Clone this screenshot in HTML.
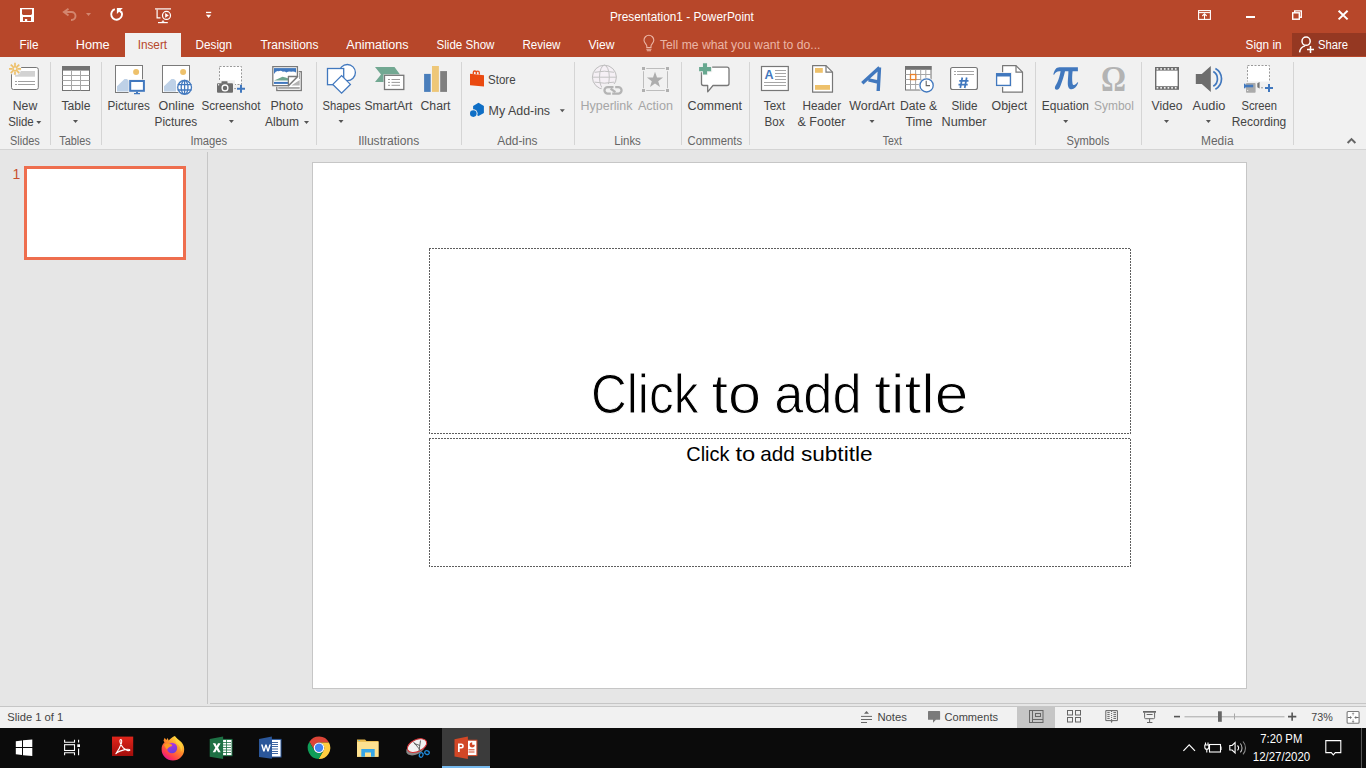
<!DOCTYPE html>
<html><head><meta charset="utf-8"><title>PowerPoint</title>
<style>
html,body{margin:0;padding:0;width:1366px;height:768px;overflow:hidden;background:#E6E6E6}
svg{display:block;font-family:"Liberation Sans",sans-serif}
</style></head><body>
<svg width="1366" height="768" viewBox="0 0 1366 768">
<rect x="0" y="0" width="1366" height="57" fill="#B7472A"/>
<rect x="125" y="33" width="56" height="24" fill="#F1F1F1"/>
<rect x="1292" y="33" width="74" height="23" fill="#953822"/>
<path fill-rule="evenodd" fill="#fff" d="M20 8h14v14h-14z M22 9.2h10v4.8l-1 1h-8l-1-1z M23 17h8v4h-3.8v-2.1h-2.3v2.1h-1.9z"/>
<g fill="none" stroke="#D3866F" stroke-width="1.9"><path d="M68.5 8.7l-4.6 3.3 4.6 3.4"/><path d="M64.5 12h7a4 4 0 0 1 0 8h-0.5"/></g>
<path d="M86 13h5l-2.5 3z" fill="#D3866F"/>
<path d="M114.8 9.2A5.4 5.4 0 1 0 121.4 11.8" fill="none" stroke="#fff" stroke-width="1.9"/><path d="M116.9 8.1h5.9l-5.9 5.8z" fill="#fff"/><path d="M118.6 9.8l2.9 2.7" stroke="#fff" stroke-width="1.9"/>
<g fill="none" stroke="#fff" stroke-width="1.2"><path d="M155 8.9h16"/><path d="M157.1 9.5v8.3h3.4"/><circle cx="166.5" cy="15.4" r="4"/><path d="M158 22.6h9.8"/></g>
<path d="M165.2 13v4.8l3.6-2.4z" fill="#fff"/><path d="M161.5 22.6l1.5-2 1.5 2" stroke="#fff" fill="none" stroke-width="1"/>
<rect x="206" y="11.8" width="5.2" height="1.3" fill="#fff"/><path d="M206 14.8h5.2l-2.6 3.2z" fill="#fff"/>
<g fill="none" stroke="#fff" stroke-width="1.1"><rect x="1198.6" y="10.6" width="11.8" height="8.8"/><path d="M1198.6 12.6h11.8"/><path d="M1204.5 19.4v-5.5M1202.3 16l2.2-2.2 2.2 2.2"/></g>
<rect x="1246" y="16" width="9" height="2" fill="#fff"/>
<g fill="none" stroke="#fff" stroke-width="1.4"><rect x="1292.7" y="12.8" width="6.6" height="6.4"/><path d="M1294.7 12.8v-1.9h6.6v6.4h-2"/></g>
<path d="M1338.6 10.7l9 8.7M1347.6 10.7l-9 8.7" stroke="#fff" stroke-width="2"/>
<g fill="none" stroke="#EBB6A6" stroke-width="1.1"><path d="M646.8 47.5v-1.6c0-1.4-2.8-3.3-2.8-5.7a4.9 4.9 0 0 1 9.8 0c0 2.4-2.8 4.3-2.8 5.7v1.6z"/><path d="M646.3 49.2h5.2M646.8 50.7h4.2"/></g>
<g fill="none" stroke="#fff" stroke-width="1.5"><circle cx="1306.1" cy="41.2" r="4.1"/><path d="M1299.6 52.4a7.5 7.5 0 0 1 5.5-6.5"/><path d="M1307 49.6h7M1310.5 46.1v7"/></g>
<text x="681.9" y="21" font-size="12" fill="#fff" text-anchor="middle" textLength="144" lengthAdjust="spacingAndGlyphs" >Presentation1 - PowerPoint</text>
<text x="29" y="49" font-size="12" fill="#fff" text-anchor="middle" textLength="19" lengthAdjust="spacingAndGlyphs" >File</text>
<text x="92.7" y="49" font-size="12" fill="#fff" text-anchor="middle" textLength="34" lengthAdjust="spacingAndGlyphs" >Home</text>
<text x="213.8" y="49" font-size="12" fill="#fff" text-anchor="middle" textLength="36.5" lengthAdjust="spacingAndGlyphs" >Design</text>
<text x="289.5" y="49" font-size="12" fill="#fff" text-anchor="middle" textLength="58" lengthAdjust="spacingAndGlyphs" >Transitions</text>
<text x="377.4" y="49" font-size="12" fill="#fff" text-anchor="middle" textLength="62.3" lengthAdjust="spacingAndGlyphs" >Animations</text>
<text x="465.5" y="49" font-size="12" fill="#fff" text-anchor="middle" textLength="58" lengthAdjust="spacingAndGlyphs" >Slide Show</text>
<text x="541.5" y="49" font-size="12" fill="#fff" text-anchor="middle" textLength="38" lengthAdjust="spacingAndGlyphs" >Review</text>
<text x="601.5" y="49" font-size="12" fill="#fff" text-anchor="middle" textLength="26" lengthAdjust="spacingAndGlyphs" >View</text>
<text x="152.4" y="49" font-size="12" fill="#B7472A" text-anchor="middle" textLength="29.5" lengthAdjust="spacingAndGlyphs" >Insert</text>
<text x="660" y="49" font-size="12" fill="#EBB6A6" text-anchor="start" textLength="160.5" lengthAdjust="spacingAndGlyphs" >Tell me what you want to do...</text>
<text x="1263.6" y="48.7" font-size="12" fill="#fff" text-anchor="middle" textLength="36" lengthAdjust="spacingAndGlyphs" >Sign in</text>
<text x="1318" y="48.7" font-size="12" fill="#fff" text-anchor="start" textLength="30" lengthAdjust="spacingAndGlyphs" >Share</text>
<rect x="0" y="57" width="1366" height="92" fill="#F1F1F1"/>
<rect x="0" y="149" width="1366" height="1" fill="#D4D4D4"/>
<rect x="50" y="62" width="1" height="83" fill="#D5D5D5"/>
<rect x="101" y="62" width="1" height="83" fill="#D5D5D5"/>
<rect x="316" y="62" width="1" height="83" fill="#D5D5D5"/>
<rect x="461" y="62" width="1" height="83" fill="#D5D5D5"/>
<rect x="574" y="62" width="1" height="83" fill="#D5D5D5"/>
<rect x="681" y="62" width="1" height="83" fill="#D5D5D5"/>
<rect x="749" y="62" width="1" height="83" fill="#D5D5D5"/>
<rect x="1035" y="62" width="1" height="83" fill="#D5D5D5"/>
<rect x="1141" y="62" width="1" height="83" fill="#D5D5D5"/>
<rect x="1293" y="62" width="1" height="83" fill="#D5D5D5"/>
<rect x="11.5" y="67.5" width="26.8" height="22" rx="2" fill="#fff" stroke="#777777"/>
<rect x="15" y="71" width="20" height="5.7" fill="#D2D2D2"/>
<g stroke="#A0A0A0" stroke-width="1"><path d="M15 81.5h2M18 81.5h17M15 84.5h2M18 84.5h17"/></g>
<circle cx="15" cy="68.8" r="6.5" fill="#F1F1F1"/>
<path d="M17.60 68.80L21.00 68.80M16.84 70.64L19.24 73.04M15.00 71.40L15.00 74.80M13.16 70.64L10.76 73.04M12.40 68.80L9.00 68.80M13.16 66.96L10.76 64.56M15.00 66.20L15.00 62.80M16.84 66.96L19.24 64.56" stroke="#EEC16B" stroke-width="1.7"/><circle cx="15" cy="68.8" r="2" fill="none" stroke="#EEC16B" stroke-width="1.4"/>
<rect x="62.5" y="66.5" width="27" height="24" fill="#fff" stroke="#737373"/>
<rect x="62" y="66" width="28" height="4.6" fill="#737373"/>
<path d="M71.5 70v20.5M80.5 70v20.5M62.5 75.5h27M62.5 80.5h27M62.5 85.5h27" stroke="#A6A6A6"/>
<rect x="115.5" y="65.5" width="27" height="27" fill="#fff" stroke="#7A7A7A"/>
<circle cx="136.1" cy="71.9" r="3" fill="#EEC16B"/>
<path d="M117 91.5v-5.3l7.5-7.2h2.5l2 2v10.5z" fill="#BED1E7"/>
<rect x="162.5" y="65.5" width="27" height="27" fill="#fff" stroke="#7A7A7A"/>
<circle cx="183.1" cy="71.9" r="3" fill="#EEC16B"/>
<path d="M164 91.5v-5.3l7.5-7.2h2.5l2 2v10.5z" fill="#BED1E7"/>
<rect x="128.5" y="79.3" width="17.5" height="16" fill="#F1F1F1"/>
<rect x="130.2" y="81" width="13.7" height="9.8" fill="#fff" stroke="#4178BE" stroke-width="2"/>
<path d="M134 93.7h6M136 92.5h2" stroke="#4178BE" stroke-width="1.3"/>
<circle cx="184.6" cy="87.3" r="8.3" fill="#F1F1F1"/>
<g fill="none" stroke="#4178BE" stroke-width="1.3"><circle cx="184.6" cy="87.3" r="6.9" fill="#fff"/><ellipse cx="184.6" cy="87.3" rx="3.4" ry="6.9"/><path d="M177.7 84.6h13.8M177.7 90h13.8M184.6 80.4v13.8"/></g>
<rect x="219.5" y="66.5" width="22" height="18" fill="#fff" stroke="#9A9A9A" stroke-dasharray="2 1.5"/>
<rect x="216" y="80.3" width="19" height="14" fill="#F1F1F1"/>
<rect x="217" y="83.3" width="16" height="9.5" rx="1" fill="#6D6D6D"/><rect x="221.5" y="81.3" width="6" height="2.5" rx="0.5" fill="#6D6D6D"/>
<circle cx="225" cy="87.9" r="2.9" fill="#6D6D6D" stroke="#fff" stroke-width="1.3"/><rect x="218" y="84.2" width="1.2" height="1.2" fill="#fff"/>
<path d="M234.2 88.6h1.8" stroke="#9A9A9A"/><path d="M237 88.8h8M241 84.8v8" stroke="#4178BE" stroke-width="2"/>
<rect x="276.8" y="71.7" width="24.5" height="18.8" fill="#fff" stroke="#7A7A7A" stroke-width="1.3"/>
<path d="M291.3 85.6l8.4-5.7v5.7z" fill="#B4B4B4"/><rect x="278.2" y="87.1" width="21.5" height="1.7" fill="#A0A0A0"/><rect x="299" y="73" width="1" height="6" fill="#A8A8A8"/>
<path d="M271.5 65.5h27.2v12l-9.5 9.3h-17.7z" fill="#F1F1F1"/>
<path d="M272.8 66.6h24.6v9.9l-9.2 9.2h-15.4z" fill="#fff" stroke="#7A7A7A" stroke-width="1.3"/>
<rect x="274" y="68.1" width="22" height="6" fill="#4178BE"/>
<path d="M274 74q2-3.5 4.5-2.8q2.5-1.2 4.3 0.6q2-1 3.5 0.6q2.5-1.5 5 -0.6q2.5-0.8 4.7 0.8v4h-22z" fill="#fff"/>
<path d="M274 80.6q4-1.8 8.5-3.8q3 0.8 6 1.8v1.9z" fill="#6FA58F"/>
<rect x="274" y="81.9" width="14.5" height="2" fill="#4178BE"/>
<path d="M288.4 85.7v-9.2h9.2z" fill="#fff" stroke="#7A7A7A" stroke-width="1.3" stroke-linejoin="round"/>
<g fill="#fff" stroke="#4178BE" stroke-width="1.3"><circle cx="347.3" cy="72.6" r="8.1"/><rect x="327.5" y="68.5" width="16.2" height="16.2"/><path d="M341.6 75.6l8.8 8.8-8.8 8.8-8.8-8.8z"/></g>
<path d="M375 67h19.5l5.5 7.5-5.5 7.5h-19.5l6-7.5z" fill="#72A892"/>
<rect x="383.5" y="74.3" width="21.3" height="16" fill="#F1F1F1"/>
<rect x="384.5" y="75.3" width="19.3" height="14.2" fill="#fff" stroke="#777" stroke-width="1.3"/>
<path d="M388 79.5h2M391.5 79.5h8.5M388 82.4h2M391.5 82.4h8.5M388 85.3h2M391.5 85.3h8.5" stroke="#9A9A9A"/>
<rect x="424.1" y="73.9" width="6.6" height="18" fill="#4A7EBB"/><rect x="432" y="66" width="6.9" height="25.9" fill="#EEC778"/><rect x="440.2" y="71.1" width="6.8" height="20.8" fill="#7F7F7F"/>
<path d="M470 73.8l14 1.4v11.4l-14-1.4z" fill="#EA4A10"/>
<path d="M473.3 74.2v-1.7a1.5 1.5 0 0 1 3 0v1.8M476.3 74.3v-1.6a1.5 1.5 0 0 1 3 0v1.9" fill="none" stroke="#EA4A10" stroke-width="1.3"/>
<path d="M478.5 102.8l5.4 3.1v7.1l-5.4 3.1-5.4-3.1v-7.1z" fill="#0F6FC6"/>
<circle cx="473.3" cy="113.6" r="4.3" fill="#F1F1F1"/><circle cx="473.3" cy="113.6" r="3.3" fill="#0F6FC6"/>
<circle cx="604.4" cy="77.2" r="12" fill="#F5F0F5" stroke="#BDBDBD" stroke-width="1"/>
<g fill="none" stroke="#C2C2C2" stroke-width="1"><ellipse cx="604.4" cy="77.2" rx="4.9" ry="12"/><path d="M592.4 77.2h24M594.5 72.3q9.9 -2.2 19.8 0M594.5 82.1q9.9 2.2 19.8 0"/></g>
<rect x="601.5" y="84" width="23" height="12.5" rx="5" fill="#F1F1F1"/>
<g fill="none" stroke="#B4B4B4" stroke-width="2.3"><path d="M613.5 87.1H607.7A3.25 3.25 0 0 0 607.7 93.6H610.8"/><path d="M612.2 93.6H618.3A3.25 3.25 0 0 0 618.3 87.1H615.2"/><path d="M610.6 88.6l4.8 3.6"/></g>
<g fill="#B0B0B0"><rect x="642" y="67" width="3" height="3"/><rect x="666" y="67" width="3" height="3"/><rect x="642" y="89" width="3" height="3"/><rect x="666" y="89" width="3" height="3"/></g>
<path d="M646.2 68.5h18.6M646.2 90.5h18.6M643.5 71.2v17M667.5 71.2v17" stroke="#BDBDBD" stroke-width="1"/>
<path d="M655.00 71.70L657.00 77.45L663.08 77.57L658.23 81.25L660.00 87.08L655.00 83.60L650.00 87.08L651.77 81.25L646.92 77.57L653.00 77.45z" fill="#ADADAD"/>
<path d="M703.5 67.2h23.5a2 2 0 0 1 2 2v14.3a2 2 0 0 1-2 2h-14l-5.3 6.3v-6.3h-4.2a2 2 0 0 1-2-2v-14.3a2 2 0 0 1 2-2z" fill="#fff" stroke="#777" stroke-width="1.3" stroke-linejoin="round"/>
<path d="M698 69.1h14.2M705 62.3v13" stroke="#F1F1F1" stroke-width="6.2"/>
<path d="M699.1 69.1h12M705 63.3v11.1" stroke="#68A890" stroke-width="4.1"/>
<rect x="761.5" y="66.5" width="26.8" height="24" fill="#fff" stroke="#777" stroke-width="1.2"/>
<text x="769" y="79" font-size="12.5" fill="#4178BE" text-anchor="middle" font-weight="bold">A</text>
<path d="M775 70.5h11M775 73.5h11M775 76.5h11M775 79.5h11M764 82.5h22M764 85.5h22" stroke="#A6A6A6"/>
<path d="M812.6 65.6h13.4l6.5 6.5v20.1h-19.9z" fill="#fff" stroke="#777" stroke-width="1.2" stroke-linejoin="round"/><path d="M826 65.6v6.5h6.5" fill="none" stroke="#777" stroke-width="1.2"/>
<rect x="815" y="68" width="7.8" height="4.8" fill="#EEC16B"/><rect x="815" y="85" width="15" height="4.8" fill="#EEC16B"/>
<path d="M862.3 83.3L879.5 67.5M879.5 67.5L878.2 91M868.5 79.8l9.5 2.2" stroke="#4178BE" stroke-width="3.4" stroke-linecap="butt"/>
<rect x="905.5" y="66.5" width="25.5" height="23.5" fill="#fff" stroke="#737373"/>
<rect x="905" y="66" width="26.5" height="3.8" fill="#737373"/>
<path d="M910.5 69.8v20.2M915.6 69.8v20.2M920.7 69.8v20.2M925.8 69.8v20.2M905.5 74.5h25.5M905.5 79.5h25.5M905.5 84.5h25.5" stroke="#A6A6A6"/>
<rect x="910.5" y="74.5" width="5.3" height="5.1" fill="#fff" stroke="#E8812B" stroke-width="1.3"/>
<circle cx="926.6" cy="85.4" r="8" fill="#F1F1F1"/><circle cx="926.6" cy="85.4" r="6.6" fill="#fff" stroke="#4178BE" stroke-width="1.3"/>
<path d="M926.2 80.8v4.8h3.8" fill="none" stroke="#666" stroke-width="1.1"/>
<rect x="950.6" y="67.5" width="26.8" height="22" rx="2" fill="#fff" stroke="#777" stroke-width="1.2"/>
<path d="M954 71.5h2M957 71.5h17M954 74.5h2M957 74.5h17" stroke="#A6A6A6"/>
<path d="M962.3 77.5l-2 10.5M966.7 77.5l-2 10.5M959.3 80.8h9.2M958.5 84.6h9.2" stroke="#4178BE" stroke-width="1.7"/>
<path d="M1002.6 65.6h13.4l6.5 6.5v20.1h-19.9z" fill="#fff" stroke="#777" stroke-width="1.2" stroke-linejoin="round"/><path d="M1016 65.6v6.5h6.5" fill="none" stroke="#777" stroke-width="1.2"/>
<rect x="995" y="72.2" width="17" height="14.7" fill="#F1F1F1"/>
<rect x="996.6" y="73.8" width="13.8" height="11.6" fill="#fff" stroke="#4178BE" stroke-width="1.3"/><rect x="996" y="73.2" width="15" height="3.3" fill="#4178BE"/>
<path d="M1053.3 74.4C1054.5 70 1056 67.2 1059.5 67.2L1077.9 67.2L1077.9 71.3L1072.6 71.3C1072 76 1072 80 1072.5 83.5C1073 86 1075.5 85.5 1077.3 82.3L1078.2 82.8C1076.7 87 1074.3 89.3 1071.6 89.3C1068.6 89.3 1067.6 86.5 1067.8 82C1068 78 1068.4 74.5 1068.4 71.3L1065 71.3C1064 76 1062.3 81 1060.6 85.5C1059.8 88.3 1058.3 89.8 1056.9 89.8C1055.2 89.8 1054.5 88.5 1055 87C1055.8 85 1058.8 81.5 1060.6 71.3L1059.3 71.3C1057 71.3 1055.2 72.5 1054.1 74.7z" fill="#4178BE"/>
<text x="1113.4" y="91" font-family="Liberation Serif" font-weight="bold" font-size="36" fill="#B3B3B3" text-anchor="middle" textLength="25" lengthAdjust="spacingAndGlyphs">Ω</text>
<rect x="1155" y="67" width="24" height="22.8" fill="#6D6D6D"/><rect x="1156.4" y="70.6" width="21.2" height="15.6" fill="#fff"/>
<rect x="1156.60" y="68.2" width="1.7" height="1.5" fill="#fff"/><rect x="1156.60" y="87.1" width="1.7" height="1.5" fill="#fff"/>
<rect x="1160.25" y="68.2" width="1.7" height="1.5" fill="#fff"/><rect x="1160.25" y="87.1" width="1.7" height="1.5" fill="#fff"/>
<rect x="1163.90" y="68.2" width="1.7" height="1.5" fill="#fff"/><rect x="1163.90" y="87.1" width="1.7" height="1.5" fill="#fff"/>
<rect x="1167.55" y="68.2" width="1.7" height="1.5" fill="#fff"/><rect x="1167.55" y="87.1" width="1.7" height="1.5" fill="#fff"/>
<rect x="1171.20" y="68.2" width="1.7" height="1.5" fill="#fff"/><rect x="1171.20" y="87.1" width="1.7" height="1.5" fill="#fff"/>
<rect x="1174.85" y="68.2" width="1.7" height="1.5" fill="#fff"/><rect x="1174.85" y="87.1" width="1.7" height="1.5" fill="#fff"/>
<path d="M1195.8 74.1h6l9-8.2v26l-9-8h-6z" fill="#6D6D6D"/>
<path d="M1213.3 71.6A8.5 8.5 0 0 1 1213.3 86.2M1215.4 68.4A11.9 11.9 0 0 1 1215.4 89.2" fill="none" stroke="#4178BE" stroke-width="1.7"/>
<rect x="1247.5" y="65.5" width="22" height="18" fill="#fff" stroke="#9A9A9A" stroke-dasharray="2 1.5"/>
<rect x="1243" y="81.5" width="30" height="14" fill="#F1F1F1"/>
<rect x="1246" y="83" width="9.6" height="9.8" rx="0.8" fill="#AAAAAA"/><rect x="1247.2" y="89.9" width="1" height="1" fill="#fff"/>
<rect x="1244" y="84.7" width="9.2" height="2.6" fill="#4178BE"/><rect x="1244" y="83.7" width="1.4" height="4.6" fill="#4178BE"/>
<path d="M1257.3 86v-2.7l2.3-1.3v6.5l-2.3-1.3z" fill="#777"/><path d="M1261 87.8h2" stroke="#9A9A9A"/>
<path d="M1265 87.9h8M1269 83.9v8" stroke="#4178BE" stroke-width="2"/>
<text x="25" y="110" font-size="12" fill="#444444" text-anchor="middle" textLength="24.5" lengthAdjust="spacingAndGlyphs" >New</text>
<text x="76" y="110" font-size="12" fill="#444444" text-anchor="middle" textLength="29" lengthAdjust="spacingAndGlyphs" >Table</text>
<text x="128.7" y="110" font-size="12" fill="#444444" text-anchor="middle" textLength="42.4" lengthAdjust="spacingAndGlyphs" >Pictures</text>
<text x="176.5" y="110" font-size="12" fill="#444444" text-anchor="middle" textLength="36" lengthAdjust="spacingAndGlyphs" >Online</text>
<text x="231" y="110" font-size="12" fill="#444444" text-anchor="middle" textLength="59" lengthAdjust="spacingAndGlyphs" >Screenshot</text>
<text x="286.8" y="110" font-size="12" fill="#444444" text-anchor="middle" textLength="32.6" lengthAdjust="spacingAndGlyphs" >Photo</text>
<text x="341.5" y="110" font-size="12" fill="#444444" text-anchor="middle" textLength="38" lengthAdjust="spacingAndGlyphs" >Shapes</text>
<text x="388.5" y="110" font-size="12" fill="#444444" text-anchor="middle" textLength="48" lengthAdjust="spacingAndGlyphs" >SmartArt</text>
<text x="435.5" y="110" font-size="12" fill="#444444" text-anchor="middle" textLength="30" lengthAdjust="spacingAndGlyphs" >Chart</text>
<text x="714.8" y="110" font-size="12" fill="#444444" text-anchor="middle" textLength="54.5" lengthAdjust="spacingAndGlyphs" >Comment</text>
<text x="774.5" y="110" font-size="12" fill="#444444" text-anchor="middle" textLength="21.4" lengthAdjust="spacingAndGlyphs" >Text</text>
<text x="821.8" y="110" font-size="12" fill="#444444" text-anchor="middle" textLength="38.5" lengthAdjust="spacingAndGlyphs" >Header</text>
<text x="872" y="110" font-size="12" fill="#444444" text-anchor="middle" textLength="45.5" lengthAdjust="spacingAndGlyphs" >WordArt</text>
<text x="918.6" y="110" font-size="12" fill="#444444" text-anchor="middle" textLength="37.2" lengthAdjust="spacingAndGlyphs" >Date &amp;</text>
<text x="964.5" y="110" font-size="12" fill="#444444" text-anchor="middle" textLength="26" lengthAdjust="spacingAndGlyphs" >Slide</text>
<text x="1009.4" y="110" font-size="12" fill="#444444" text-anchor="middle" textLength="35.7" lengthAdjust="spacingAndGlyphs" >Object</text>
<text x="1065.4" y="110" font-size="12" fill="#444444" text-anchor="middle" textLength="47.2" lengthAdjust="spacingAndGlyphs" >Equation</text>
<text x="1167" y="110" font-size="12" fill="#444444" text-anchor="middle" textLength="30.8" lengthAdjust="spacingAndGlyphs" >Video</text>
<text x="1209" y="110" font-size="12" fill="#444444" text-anchor="middle" textLength="32.8" lengthAdjust="spacingAndGlyphs" >Audio</text>
<text x="1259.2" y="110" font-size="12" fill="#444444" text-anchor="middle" textLength="35.5" lengthAdjust="spacingAndGlyphs" >Screen</text>
<text x="606.5" y="110" font-size="12" fill="#A6A6A6" text-anchor="middle" textLength="52" lengthAdjust="spacingAndGlyphs" >Hyperlink</text>
<text x="655.4" y="110" font-size="12" fill="#A6A6A6" text-anchor="middle" textLength="35" lengthAdjust="spacingAndGlyphs" >Action</text>
<text x="1114" y="110" font-size="12" fill="#A6A6A6" text-anchor="middle" textLength="39.8" lengthAdjust="spacingAndGlyphs" >Symbol</text>
<text x="175.9" y="126.4" font-size="12" fill="#444444" text-anchor="middle" textLength="42.7" lengthAdjust="spacingAndGlyphs" >Pictures</text>
<text x="774.5" y="126.4" font-size="12" fill="#444444" text-anchor="middle" textLength="20" lengthAdjust="spacingAndGlyphs" >Box</text>
<text x="821.5" y="126.4" font-size="12" fill="#444444" text-anchor="middle" textLength="48" lengthAdjust="spacingAndGlyphs" >&amp; Footer</text>
<text x="919" y="126.4" font-size="12" fill="#444444" text-anchor="middle" textLength="27" lengthAdjust="spacingAndGlyphs" >Time</text>
<text x="964" y="126.4" font-size="12" fill="#444444" text-anchor="middle" textLength="45" lengthAdjust="spacingAndGlyphs" >Number</text>
<text x="1259" y="126.4" font-size="12" fill="#444444" text-anchor="middle" textLength="54.6" lengthAdjust="spacingAndGlyphs" >Recording</text>
<text x="8.2" y="126.4" font-size="12" fill="#444444" text-anchor="start" textLength="25.5" lengthAdjust="spacingAndGlyphs" >Slide</text>
<path d="M36.3 121.0h5l-2.5 3z" fill="#555"/>
<text x="265" y="126.4" font-size="12" fill="#444444" text-anchor="start" textLength="34" lengthAdjust="spacingAndGlyphs" >Album</text>
<path d="M304.0 121.0h5l-2.5 3z" fill="#555"/>
<path d="M73.0 120.0h5l-2.5 3z" fill="#555"/>
<path d="M228.9 120.0h5l-2.5 3z" fill="#555"/>
<path d="M338.5 120.0h5l-2.5 3z" fill="#555"/>
<path d="M869.5 120.0h5l-2.5 3z" fill="#555"/>
<path d="M1063.2 120.0h5l-2.5 3z" fill="#555"/>
<path d="M1164.0 120.0h5l-2.5 3z" fill="#555"/>
<path d="M1205.9 120.0h5l-2.5 3z" fill="#555"/>
<text x="488.1" y="84" font-size="12" fill="#444444" text-anchor="start" textLength="27.5" lengthAdjust="spacingAndGlyphs" >Store</text>
<text x="488.6" y="115" font-size="12" fill="#444444" text-anchor="start" textLength="61.5" lengthAdjust="spacingAndGlyphs" >My Add-ins</text>
<path d="M559.8 109.3h5l-2.5 3z" fill="#555"/>
<text x="24.9" y="145" font-size="12" fill="#666666" text-anchor="middle" textLength="29.8" lengthAdjust="spacingAndGlyphs" >Slides</text>
<text x="75" y="145" font-size="12" fill="#666666" text-anchor="middle" textLength="31.5" lengthAdjust="spacingAndGlyphs" >Tables</text>
<text x="208.8" y="145" font-size="12" fill="#666666" text-anchor="middle" textLength="36.8" lengthAdjust="spacingAndGlyphs" >Images</text>
<text x="388.7" y="145" font-size="12" fill="#666666" text-anchor="middle" textLength="61" lengthAdjust="spacingAndGlyphs" >Illustrations</text>
<text x="517.4" y="145" font-size="12" fill="#666666" text-anchor="middle" textLength="40.3" lengthAdjust="spacingAndGlyphs" >Add-ins</text>
<text x="627.5" y="145" font-size="12" fill="#666666" text-anchor="middle" textLength="26.7" lengthAdjust="spacingAndGlyphs" >Links</text>
<text x="714.8" y="145" font-size="12" fill="#666666" text-anchor="middle" textLength="54.5" lengthAdjust="spacingAndGlyphs" >Comments</text>
<text x="892.4" y="145" font-size="12" fill="#666666" text-anchor="middle" textLength="19.2" lengthAdjust="spacingAndGlyphs" >Text</text>
<text x="1087.9" y="145" font-size="12" fill="#666666" text-anchor="middle" textLength="42.7" lengthAdjust="spacingAndGlyphs" >Symbols</text>
<text x="1217.3" y="145" font-size="12" fill="#666666" text-anchor="middle" textLength="32.5" lengthAdjust="spacingAndGlyphs" >Media</text>
<path d="M1347.6 143l3.9-3.9 3.9 3.9" fill="none" stroke="#666" stroke-width="2"/>
<rect x="0" y="150" width="1366" height="557" fill="#E6E6E6"/>
<rect x="207" y="152" width="1" height="552" fill="#C6C6C6"/>
<rect x="210" y="703" width="1156" height="1" fill="#C6C6C6"/>
<rect x="0" y="706" width="1366" height="1" fill="#C6C6C6"/>
<rect x="25.5" y="167.5" width="159" height="91" fill="#fff" stroke="#EE6E4E" stroke-width="3"/>
<text x="12.6" y="178.5" font-size="14" fill="#C8502D" text-anchor="start" >1</text>
<rect x="312.5" y="162.5" width="934" height="526" fill="#fff" stroke="#C6C6C6" stroke-width="1"/>
<defs><pattern id="dh0" x="0" y="0" width="3" height="1" patternUnits="userSpaceOnUse"><rect width="2" height="1" fill="#5E5E5E"/></pattern><pattern id="dh2" x="2" y="0" width="3" height="1" patternUnits="userSpaceOnUse"><rect width="2" height="1" fill="#5E5E5E"/></pattern><pattern id="dv0" x="0" y="0" width="1" height="3" patternUnits="userSpaceOnUse"><rect width="1" height="2" fill="#5E5E5E"/></pattern><pattern id="dv1" x="0" y="1" width="1" height="3" patternUnits="userSpaceOnUse"><rect width="1" height="2" fill="#5E5E5E"/></pattern></defs>
<rect x="429" y="248" width="702" height="1" fill="url(#dh0)"/><rect x="429" y="433" width="702" height="1" fill="url(#dh2)"/>
<rect x="429" y="249" width="1" height="184" fill="url(#dv0)"/><rect x="1130" y="249" width="1" height="184" fill="url(#dv0)"/>
<rect x="429" y="438" width="702" height="1" fill="url(#dh0)"/><rect x="429" y="566" width="702" height="1" fill="url(#dh2)"/>
<rect x="429" y="439" width="1" height="127" fill="url(#dv1)"/><rect x="1130" y="439" width="1" height="127" fill="url(#dv1)"/>
<text x="590.95" y="412.6" font-size="56" fill="#000" text-anchor="start" textLength="107.64" lengthAdjust="spacingAndGlyphs" stroke="#fff" stroke-width="1">Click</text>
<text x="711.54" y="412.6" font-size="56" fill="#000" text-anchor="start" textLength="49.54" lengthAdjust="spacingAndGlyphs" stroke="#fff" stroke-width="1">to</text>
<text x="774.16" y="412.6" font-size="56" fill="#000" text-anchor="start" textLength="87.58" lengthAdjust="spacingAndGlyphs" stroke="#fff" stroke-width="1">add</text>
<text x="874.32" y="412.6" font-size="56" fill="#000" text-anchor="start" textLength="94.09" lengthAdjust="spacingAndGlyphs" stroke="#fff" stroke-width="1">title</text>
<text x="686.25" y="460.6" font-size="21" fill="#000" text-anchor="start" textLength="43.23" lengthAdjust="spacingAndGlyphs" >Click</text>
<text x="735.4" y="460.6" font-size="21" fill="#000" text-anchor="start" textLength="19.81" lengthAdjust="spacingAndGlyphs" >to</text>
<text x="760.19" y="460.6" font-size="21" fill="#000" text-anchor="start" textLength="34.65" lengthAdjust="spacingAndGlyphs" >add</text>
<text x="800.92" y="460.6" font-size="21" fill="#000" text-anchor="start" textLength="71.67" lengthAdjust="spacingAndGlyphs" >subtitle</text>
<rect x="0" y="707" width="1366" height="21" fill="#F1F1F1"/>
<text x="7.3" y="721" font-size="11" fill="#444444" text-anchor="start" textLength="56" lengthAdjust="spacingAndGlyphs" >Slide 1 of 1</text>
<path d="M864 713.8l2.5-2.9 2.5 2.9z" fill="#666"/><path d="M861 716.4h11M861 719.5h11M861 722.5h6" stroke="#666" stroke-width="1"/>
<text x="877.4" y="721" font-size="11" fill="#444444" text-anchor="start" textLength="29.5" lengthAdjust="spacingAndGlyphs" >Notes</text>
<path d="M928.6 711.1h10.9a0.6 0.6 0 0 1 0.6 0.6v7.5a0.6 0.6 0 0 1-0.6 0.6h-3.6l-2.9 3v-3h-4.4a0.6 0.6 0 0 1-0.6-0.6v-7.5a0.6 0.6 0 0 1 0.6-0.6z" fill="#7A7A7A"/>
<text x="944.5" y="721" font-size="11" fill="#444444" text-anchor="start" textLength="53.5" lengthAdjust="spacingAndGlyphs" >Comments</text>
<rect x="1017" y="707" width="38" height="21" fill="#C6C6C6"/>
<g fill="none" stroke="#666" stroke-width="1"><rect x="1029.5" y="710.5" width="13.5" height="12"/><path d="M1032.5 710.5v12M1032.5 719.5h10.5"/><rect x="1035.5" y="713.5" width="5" height="3"/></g>
<g fill="none" stroke="#666" stroke-width="1"><rect x="1067.5" y="710.5" width="5" height="4.5"/><rect x="1075.5" y="710.5" width="5" height="4.5"/><rect x="1067.5" y="717.5" width="5" height="4.5"/><rect x="1075.5" y="717.5" width="5" height="4.5"/></g>
<g fill="none" stroke="#666" stroke-width="1"><path d="M1105.8 710.6h11.6v10h-11.6z"/><path d="M1111.6 711v11.3" stroke-dasharray="1 1"/><path d="M1107.3 712.4h2.4M1107.3 714.4h2.4M1107.3 716.4h2.4M1107.3 718.4h2.4M1113.4 712.4h2.6M1113.4 714.4h2.6M1113.4 716.4h2.6M1113.4 718.4h2.6"/></g><path d="M1110.6 721.5h2l-1 1.4z" fill="#666"/>
<rect x="1143" y="711" width="13" height="1.7" fill="#666"/><g fill="none" stroke="#666" stroke-width="1"><path d="M1144.6 712.5v5.2a1 1 0 0 0 1 1h8a1 1 0 0 0 1-1v-5.2"/><path d="M1146.6 714.5h6M1149.6 718.7v3.6M1147 722.5h5.4"/></g>
<rect x="1174" y="715.8" width="6" height="1.6" fill="#555"/>
<rect x="1184.5" y="716.3" width="100" height="1" fill="#A8A8A8"/><rect x="1234" y="713.5" width="1" height="6" fill="#A8A8A8"/>
<rect x="1218" y="711.3" width="3.8" height="10.5" fill="#666"/>
<path d="M1288 716.6h8.3M1292.15 712.5v8.3" stroke="#555" stroke-width="1.6"/>
<text x="1311.3" y="721" font-size="11" fill="#444444" text-anchor="start" textLength="21.5" lengthAdjust="spacingAndGlyphs" >73%</text>
<rect x="1347.1" y="711.5" width="12" height="11.7" rx="1" fill="#fff" stroke="#7A7A7A" stroke-width="1.1"/><g fill="#6E6E6E"><path d="M1347.6 717.1h2.4v-1.2l2 1.6-2 1.6v-1.2h-2.4z"/><path d="M1358.6 717.1h-2.4v-1.2l-2 1.6 2 1.6v-1.2h2.4z"/><path d="M1351.7 713.8h2.8l-1.4-1.4z"/><path d="M1351.7 721.3h2.8l-1.4 1.4z"/></g><path d="M1353.1 714v1.5M1353.1 719.3v1.6" stroke="#AAA" stroke-width="1"/>
<rect x="0" y="728" width="1366" height="40" fill="#0B0B0B"/>
<rect x="442" y="728" width="48" height="40" fill="#3B3B3B"/>
<rect x="442" y="766" width="48" height="2" fill="#76B9ED"/>
<path d="M15.8 741.2l6.2-0.8v6.6h-6.2z M23 740.2l9.3-0.8v7.6h-9.3z M15.8 748h6.2v6.9l-6.2-0.7z M23 748h9.3v8.1l-9.3-0.9z" fill="#fff"/>
<g fill="none" stroke="#fff" stroke-width="1.1"><path d="M64.6 739.8v2.5h9.9v-2.5"/><rect x="64.6" y="744.7" width="9.9" height="5.8"/><path d="M64.6 755.3v-2.5h9.9v2.5"/><path d="M78.6 739.8v2.6M78.6 748.5v6.8"/></g><rect x="77.3" y="744.3" width="2.7" height="2.7" fill="#fff"/>
<defs><linearGradient id="acr" x1="0" y1="0" x2="0" y2="1"><stop offset="0" stop-color="#E0251B"/><stop offset="1" stop-color="#A30E0B"/></linearGradient></defs>
<rect x="112" y="736.6" width="21.2" height="19.4" fill="url(#acr)"/>
<path d="M116 753.5c2-2.5 4-6 5.5-10.5c0.5-2 0-3.5-0.8-3.5c-1 0-1 2 -0.3 3.8c1.2 3 3.5 6 7 7.2c1.5 0.4 2.6 0 2.4-0.6c-0.3-0.8-2.5-0.8-5 -0.3c-2.5 0.6-6 1.6-8 3.1c-1 0.8 -1 1.5 -0.8 0.8z" fill="none" stroke="#fff" stroke-width="1.1"/>
<defs><linearGradient id="ffx" x1="0.85" y1="0.1" x2="0.25" y2="0.95"><stop offset="0" stop-color="#FFE640"/><stop offset="0.45" stop-color="#FF8A2A"/><stop offset="0.8" stop-color="#FF3F4A"/><stop offset="1" stop-color="#E8178A"/></linearGradient><linearGradient id="ffg" x1="0.3" y1="0" x2="0.6" y2="1"><stop offset="0" stop-color="#B833E1"/><stop offset="1" stop-color="#6A3EDB"/></linearGradient></defs>
<path d="M163.5 740.5l1.2-2.8 1.5 2.3 1.6-2 0.8 2.6c1.5-2 4-3.6 6.3-4.6 1 1.8 3.5 3.8 5.5 5.3 2.2 1.8 3.8 4.8 3.8 7.9a11.3 11.3 0 0 1-22.6 0c0-3 0.9-5.3 2.9-6.7z" fill="url(#ffx)"/>
<circle cx="172" cy="748" r="5.2" fill="url(#ffg)"/>
<path d="M164 745c2-1.8 5-2 7.5-0.6 1.2 0.7 0.5 1.8-0.8 2.2-1.8 0.5-3 1.6-3.6 3.2-1.3-1.5-2.2-3.2-3.1-4.8z" fill="#FF9A22"/>
<path d="M175 737c2.5 2 5.8 4.5 6.8 8.2 0.6 2.5 0.2 5-0.9 6.8 0.3-3.5-1-6.3-3.8-8.2-1-0.7-2-2.5-2.1-6.8z" fill="#FFD53A" opacity="0.8"/>
<rect x="222.5" y="739.4" width="9.5" height="16.3" fill="#fff" stroke="#1D7044" stroke-width="1"/>
<path d="M223 742.5h8M223 745h8M223 747.5h8M223 750h8M223 752.5h8M226.5 739.5v16" stroke="#1D7044" stroke-width="0.8"/>
<path d="M209.7 738.9l13.4-2.5v22.5l-13.4-2.2z" fill="#1D7044"/>
<path d="M212.8 743.3h2.6l1.3 2.6 1.3-2.6h2.6l-2.5 4.4 2.6 4.5h-2.6l-1.4-2.7-1.4 2.7h-2.6l2.6-4.5z" fill="#fff"/>
<rect x="271.5" y="739.4" width="9.5" height="17.6" fill="#fff" stroke="#2B579A" stroke-width="1"/>
<path d="M272 742.5h6M272 744.5h6M272 746.5h6M272 749h6M272 751.5h6M272 753.5h6" stroke="#2B579A" stroke-width="0.9"/>
<path d="M259 739.1l12.9-2.5v22.1l-12.9-1.7z" fill="#2B579A"/>
<path d="M261 744.4h1.6l1.3 4.6 1.4-4.6h1.3l1.4 4.6 1.3-4.6h1.6l-2.2 7h-1.4l-1.35-4.4-1.35 4.4h-1.4z" fill="#fff"/>
<path d="M319.00 742.50L328.98 742.50A11.3 11.3 0 0 0 309.42 741.81L314.41 750.45A5.3 5.3 0 0 1 319.00 742.50z" fill="#DB4437"/>
<path d="M319.00 742.50L328.98 742.50A11.3 11.3 0 0 0 309.42 741.81L314.41 750.45A5.3 5.3 0 0 1 319.00 742.50z" fill="#FFCD40" transform="rotate(120 319 747.8)"/>
<path d="M319.00 742.50L328.98 742.50A11.3 11.3 0 0 0 309.42 741.81L314.41 750.45A5.3 5.3 0 0 1 319.00 742.50z" fill="#0F9D58" transform="rotate(240 319 747.8)"/>
<circle cx="319" cy="747.8" r="5.3" fill="#fff"/><circle cx="319" cy="747.8" r="4.2" fill="#4285F4"/>
<path d="M357 739.5h8l1.5 1.5h12v15.8h-21.5z" fill="#E8B84A"/><rect x="357" y="741.8" width="21.5" height="15" fill="#FDE190"/><rect x="358.5" y="740" width="1.3" height="1" fill="#4FC3F7"/>
<path d="M361.3 756.8V748.9H374.7V756.8H371V752.5H365V756.8z" fill="#35A6E8"/>
<ellipse cx="415.5" cy="748.5" rx="10" ry="6" transform="rotate(-25 415.5 748.5)" fill="#888"/>
<ellipse cx="417" cy="745.6" rx="10.3" ry="6" transform="rotate(-25 417 745.6)" fill="#F2F2F2" stroke="#D13438" stroke-width="1.1"/>
<path d="M413.5 742l7.5 9M420.5 740.5l-1.5 10.5M414 743.5l6 2" stroke="#555" stroke-width="0.9" fill="none"/>
<g fill="none" stroke="#1E88D8" stroke-width="1.3"><ellipse cx="421.2" cy="755" rx="1.8" ry="2.3" transform="rotate(20 421.2 755)"/><ellipse cx="427" cy="752.6" rx="2.3" ry="1.8" transform="rotate(20 427 752.6)"/></g>
<rect x="467.5" y="740.2" width="9.4" height="15.4" fill="#fff" stroke="#D24726" stroke-width="1"/>
<path d="M472.2 742.2v2.6h2.6a2.6 2.6 0 1 1-2.6-2.6z" fill="#D24726"/><path d="M468.5 749.8h6M468.5 752h6" stroke="#D24726" stroke-width="1"/>
<path d="M454.5 739.2l13.4-2.6v22.3l-13.4-2.4z" fill="#D24726"/>
<path d="M458 743.6h3.3a2.5 2.5 0 0 1 0 5h-1.6v3.4h-1.7z M459.7 745.1v2h1.5a1 1 0 0 0 0-2z" fill="#fff" fill-rule="evenodd"/>
<path d="M1183.4 750.8l5.8-6 5.8 6" fill="none" stroke="#fff" stroke-width="1.2"/>
<g fill="none" stroke="#fff" stroke-width="1.1"><rect x="1209.5" y="744.5" width="11" height="7.5"/><path d="M1221 746.5v3.5"/><path d="M1205.5 742.5v2.5M1208 742.5v2.5M1204.8 745h4v2.2a2 2 0 0 1-4 0z M1206.8 749.2v3.2"/></g>
<g fill="none" stroke="#fff" stroke-width="1.1"><path d="M1229.8 745.5h2.3l3-3v10.5l-3-3h-2.3z"/><path d="M1237.5 745.5a3.5 3.5 0 0 1 0 4.8"/><path d="M1240.3 743.5a6.5 6.5 0 0 1 0 8.8" stroke="#BBB"/><path d="M1243 741.5a9.5 9.5 0 0 1 0 12.8" stroke="#888"/></g>
<text x="1281.3" y="743" font-size="12" fill="#fff" text-anchor="middle" textLength="42" lengthAdjust="spacingAndGlyphs" >7:20 PM</text>
<text x="1281.5" y="760.6" font-size="12" fill="#fff" text-anchor="middle" textLength="57.5" lengthAdjust="spacingAndGlyphs" >12/27/2020</text>
<path d="M1325.8 740.6h15v12h-5.5l-2 2.3-2-2.3h-5.5z" fill="none" stroke="#fff" stroke-width="1.1"/>
<rect x="1361" y="728" width="1" height="40" fill="#555"/>
</svg>
</body></html>
